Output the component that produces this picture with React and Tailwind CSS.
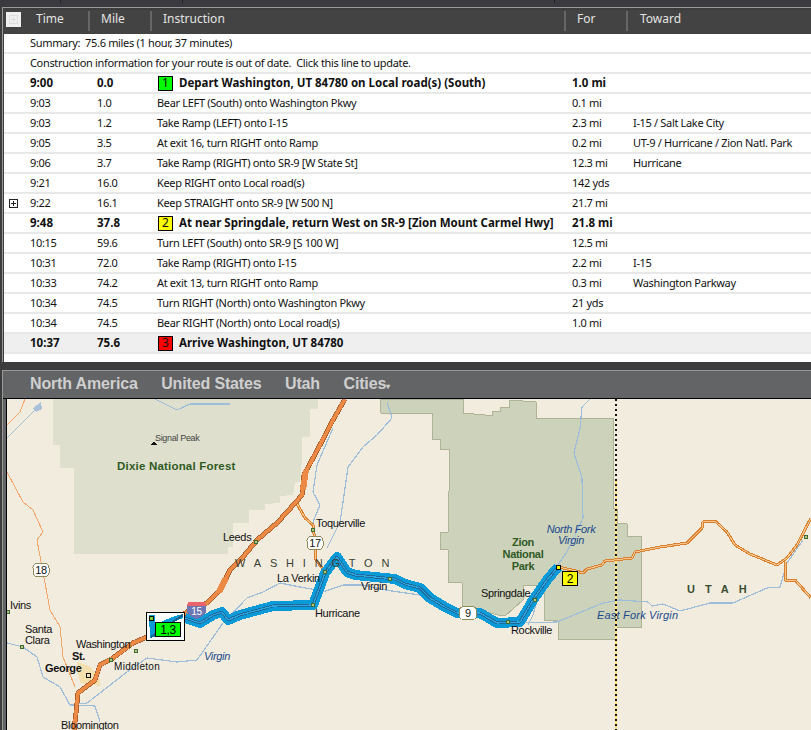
import React from "react";

const rows = [
  { time: "9:00", mile: "0.0", text: "Depart Washington, UT 84780 on Local road(s) (South)", dist: "1.0 mi", bold: true, pin: "1", pinBg: "bg-[#00ff00]" },
  { time: "9:03", mile: "1.0", text: "Bear LEFT (South) onto Washington Pkwy", dist: "0.1 mi" },
  { time: "9:03", mile: "1.2", text: "Take Ramp (LEFT) onto I-15", dist: "2.3 mi", toward: "I-15 / Salt Lake City" },
  { time: "9:05", mile: "3.5", text: "At exit 16, turn RIGHT onto Ramp", dist: "0.2 mi", toward: "UT-9 / Hurricane / Zion Natl. Park" },
  { time: "9:06", mile: "3.7", text: "Take Ramp (RIGHT) onto SR-9 [W State St]", dist: "12.3 mi", toward: "Hurricane" },
  { time: "9:21", mile: "16.0", text: "Keep RIGHT onto Local road(s)", dist: "142 yds" },
  { time: "9:22", mile: "16.1", text: "Keep STRAIGHT onto SR-9 [W 500 N]", dist: "21.7 mi", plus: true },
  { time: "9:48", mile: "37.8", text: "At near Springdale, return West on SR-9 [Zion Mount Carmel Hwy]", dist: "21.8 mi", bold: true, pin: "2", pinBg: "bg-[#ffff00]" },
  { time: "10:15", mile: "59.6", text: "Turn LEFT (South) onto SR-9 [S 100 W]", dist: "12.5 mi" },
  { time: "10:31", mile: "72.0", text: "Take Ramp (RIGHT) onto I-15", dist: "2.2 mi", toward: "I-15" },
  { time: "10:33", mile: "74.2", text: "At exit 13, turn RIGHT onto Ramp", dist: "0.3 mi", toward: "Washington Parkway" },
  { time: "10:34", mile: "74.5", text: "Turn RIGHT (North) onto Washington Pkwy", dist: "21 yds" },
  { time: "10:34", mile: "74.5", text: "Bear RIGHT (North) onto Local road(s)", dist: "1.0 mi" },
  { time: "10:37", mile: "75.6", text: "Arrive Washington, UT 84780", bold: true, pin: "3", pinBg: "bg-[#ff0000]", shaded: true },
];

const PlusBox = ({ light }) => (
  <svg width="9" height="9" viewBox="0 0 9 9" className="block">
    <rect x="0.5" y="0.5" width="8" height="8" fill="none" stroke={light ? "#ddd" : "#222"} />
    <path d="M4.5 2v5M2 4.5h5" stroke={light ? "#ddd" : "#222"} />
  </svg>
);

const Row = ({ r }) => (
  <div className={`flex h-5 shrink-0 items-center border-b-2 border-[#e8e8e8] ${r.shaded ? "bg-[#efefef]" : ""} ${r.bold ? "text-[11.5px] font-bold tracking-normal" : ""}`}>
    <div className="flex w-[26px] shrink-0 pl-[5px]">{r.plus && <PlusBox />}</div>
    <div className="w-[67px] shrink-0">{r.time}</div>
    <div className="w-[60px] shrink-0">{r.mile}</div>
    <div className="flex w-[415px] shrink-0 items-center whitespace-pre">
      {r.pin && (
        <span className={`mr-[6px] ml-[1px] flex h-[15px] w-[15px] items-center justify-center border border-black text-[12px] font-normal ${r.pinBg}`}>
          {r.pin}
        </span>
      )}
      {r.text}
    </div>
    <div className="w-[61px] shrink-0">{r.dist}</div>
    <div className="whitespace-nowrap">{r.toward}</div>
  </div>
);

const Road = ({ d, w = 3, outer = "#d9812f", inner = "#f6c48a", iw = 1 }) => (
  <g fill="none" strokeLinejoin="round">
    <polyline points={d} stroke={outer} strokeWidth={w} />
    <polyline points={d} stroke={inner} strokeWidth={iw} />
  </g>
);

const River = ({ d }) => <polyline points={d} fill="none" stroke="#9dbdd8" strokeWidth="1.2" />;

const Shield = ({ x, y, n, w = 16 }) => (
  <g>
    <rect x={x - w / 2} y={y - 6.5} width={w} height="13" rx="4" fill="#fff" stroke="#8f8a5c" />
    <text x={x} y={y + 4} textAnchor="middle" fontSize="11" fill="#111">{n}</text>
  </g>
);

const Town = ({ x, y }) => <circle cx={x} cy={y} r="1.8" fill="#b9c77e" stroke="#3f6b37" />;

const Label = ({ x, y, children, size = 11, fill = "#111", weight, style, spacing, anchor }) => (
  <text x={x} y={y} fontSize={size} fill={fill} fontWeight={weight} fontStyle={style} letterSpacing={spacing} textAnchor={anchor}>
    {children}
  </text>
);

const route =
  "185,618 200,623 213,615 222,612 228,620 240,615 273,606 313,605 325,573 337,557 347,572 355,575 395,579 405,584 420,588 430,598 445,607 457,613 480,613 497,623 520,622 533,600 547,580 558,567";
const freeway =
  "345,399 333,420 320,445 304,475 302,495 296,502 278,522 257,540 243,557 230,570 220,590 207,603 187,612 147,637 133,643 113,658 100,665 95,680 78,693 76,713 74,730";

const RouteMap = () => (
  <svg width="804" height="331" viewBox="7 399 804 331" shapeRendering="crispEdges" className="block font-['Liberation_Sans',sans-serif]">
    <rect x="7" y="399" width="804" height="331" fill="#f2ecdf" />

    <polygon
      points="53,399 318,399 318,409 310,409 310,437 302,437 302,460 300,482 295,482 293,495 280,496 280,503 265,504 265,510 249,510 249,523 233,523 233,547 228,547 228,554 74,554 74,468 60,468 60,445 53,445"
      fill="#dee0cd"
    />
    <polygon
      points="380,399 463,399 463,413 485,415 492,415 492,411 500,411 500,407 509,407 509,400 523,401 536,402 536,418 613,418 613,508 617,509 617,523 627,524 627,536 641,536 641,627 616,627 615,640 558,639 558,621 544,620 544,585 523,585 523,600 505,616 498,615 462,606 462,583 448,582 448,550 440,549 440,532 448,532 449,491 449,449 440,449 440,439 432,439 432,413 392,413 381,413"
      fill="#cdd2bb"
      stroke="#aeb396"
    />
    <polygon points="77,662 90,666 100,680 100,686 80,683 78,672" fill="#f3e0ae" />

    <River d="155,399 177,410 190,404 230,404" />
    <River d="7,438 35,410" />
    <polygon points="33,408 41,402 42,409 36,412" fill="#a9c0d8" />
    <River d="387,402 392,418 377,435 363,447 348,467 343,502 340,522 327,548" />
    <River d="333,428 317,465 313,492 320,505 313,522 316,540" />
    <River d="7,643 23,647 37,657 43,677 60,687 70,705 87,703 127,672 147,658 177,662 197,660 223,623 247,598 263,592 280,583 300,587 317,590 323,592 343,585 363,585 385,590 420,595 455,612 480,618 520,623 557,622 603,603 620,600 648,602 652,606 663,604 680,611 710,603 733,603 767,588 780,587 787,563 803,540" />
    <River d="590,399 582,407 580,428 574,453 582,478 583,518 567,552 540,590 533,615 528,625" />
    <River d="70,705 95,706 100,722" />

    <polyline points="616,480 616,730" stroke="#ffe27a" strokeWidth="1.5" />
    <polyline points="616,399 616,730" stroke="#111" strokeWidth="1.5" strokeDasharray="2 3" />

    <polyline points="25,399 20,412 7,425" fill="none" stroke="#f3a56c" strokeWidth="1" />
    <polyline points="7,472 23,502 33,510 43,532 37,540 50,610 60,627 63,657 75,687" fill="none" stroke="#f3a56c" strokeWidth="1" />
    <Road d="296,502 305,518 313,525 315,543 316,560 325,572" />
    <Road d="558,567 572,570 583,573 587,569 602,565 605,561 632,558 635,552 660,547 687,543 702,528 703,522 715,521 727,532 735,545 750,554 777,565 787,558 797,545 811,518" />
    <Road d="785,562 785,580 795,580 811,598" />

    <polyline points={freeway} fill="none" stroke="#a9602c" strokeWidth="5" strokeLinejoin="round" />
    <polyline points={freeway} fill="none" stroke="#ec8a45" strokeWidth="3.5" strokeLinejoin="round" />
    <polyline points="306,470 303,490" fill="none" stroke="#ec8a45" strokeWidth="6" />
    <polyline points="226,578 219,592" fill="none" stroke="#ec8a45" strokeWidth="6" />

    <polyline points={route} fill="none" stroke="#0a9ad8" strokeWidth="10" strokeLinejoin="round" />
    <polyline points={route} fill="none" stroke="#1f6a9c" strokeWidth="3" strokeLinejoin="round" />
    <polyline points={route} fill="none" stroke="#2fa3dc" strokeWidth="1.2" strokeLinejoin="round" />

    <Town x={256} y={542} />
    <Town x={313} y={530} />
    <Town x={325} y={572} />
    <Town x={313} y={605} />
    <Town x={390} y={579} />
    <Town x={508} y={622} />
    <Town x={535} y={600} />
    <Town x={22} y={647} />
    <Town x={8} y={612} />
    <Town x={111} y={660} />
    <Town x={136} y={651} />
    <Town x={806} y={537} />
    <rect x="86.5" y="673.5" width="4" height="4" fill="none" stroke="#111" />

    <Label x={155} y={441} size={9} fill="#444">Signal Peak</Label>
    <polygon points="151,444.5 154,442 157,444.5" fill="#111" />
    <Label x={117} y={470} size={11.5} spacing="0.2" weight="bold" fill="#2f5a24">Dixie National Forest</Label>
    <Label x={223} y={541}>Leeds</Label>
    <Label x={316} y={527}>Toquerville</Label>
    <Label x={235} y={567} fill="#3a3f33" spacing="8.8">WASHINGTON</Label>
    <Label x={277} y={582}>La Verkin</Label>
    <Label x={361} y={590}>Virgin</Label>
    <Label x={315} y={617}>Hurricane</Label>
    <Label x={481} y={597}>Springdale</Label>
    <Label x={511} y={634}>Rockville</Label>
    <Label x={523} y={546} anchor="middle" weight="bold" fill="#2f5a24">Zion</Label>
    <Label x={523} y={558} anchor="middle" weight="bold" fill="#2f5a24">National</Label>
    <Label x={523} y={570} anchor="middle" weight="bold" fill="#2f5a24">Park</Label>
    <Label x={571} y={533} anchor="middle" style="italic" fill="#1c4a8c">North Fork</Label>
    <Label x={571} y={544} anchor="middle" style="italic" fill="#1c4a8c">Virgin</Label>
    <Label x={597} y={619} style="italic" fill="#1c4a8c" spacing="0.2">East Fork Virgin</Label>
    <Label x={204} y={660} style="italic" fill="#1c4a8c">Virgin</Label>
    <Label x={687} y={593} weight="bold" fill="#3a4d33" spacing="10">UTAH</Label>
    <Label x={10} y={609}>Ivins</Label>
    <Label x={25} y={633}>Santa</Label>
    <Label x={25} y={644}>Clara</Label>
    <Label x={76} y={648}>Washington</Label>
    <Label x={114} y={670} size={10} spacing="0.3">Middleton</Label>
    <Label x={72} y={660} weight="bold">St.</Label>
    <Label x={45} y={672} weight="bold">George</Label>
    <Label x={61} y={729}>Bloomington</Label>

    <Shield x={41} y={570} n="18" />
    <Shield x={315} y={543} n="17" />
    <Shield x={468} y={613} n="9" w={17} />
    <path d="M188 602h17l1 5v5q-1 4-9.5 7q-8.5-3-9.5-7v-5z" fill="#6c76b4" />
    <path d="M188 602h17l1 4h-19z" fill="#e9646a" />
    <text x="196.5" y="615" textAnchor="middle" fontSize="10" fill="#fff">15</text>

    <rect x="146.5" y="612.5" width="38" height="28" fill="#fff" stroke="#000" />
    <polygon points="149,615 155,615 156,636 150,638" fill="#0a9ad8" />
    <polygon points="161,622 172,617 183,614 183,618 172,622" fill="#0a9ad8" />
    <polyline points="183,615 151,637" stroke="#1d5f8c" strokeWidth="2" />
    <rect x="149.5" y="616.5" width="4" height="4" fill="#7cd432" stroke="#000" />
    <rect x="155.5" y="622.5" width="25" height="14" fill="#00ff00" stroke="#000" />
    <text x="168" y="634" textAnchor="middle" fontSize="12" fill="#000">1,3</text>

    <rect x="556.5" y="565.5" width="4" height="4" fill="#ffff00" stroke="#000" />
    <rect x="562.5" y="571.5" width="15" height="14" fill="#ffff00" stroke="#000" />
    <text x="570" y="583" textAnchor="middle" fontSize="12" fill="#000">2</text>
  </svg>
);

const App = () => {
  return (
    <div className="flex h-[730px] w-[811px] flex-col overflow-hidden bg-[#3d3d3d] font-['Noto_Sans',sans-serif] text-[11px] tracking-[-0.33px] text-[#111]">
      <div className="flex h-[7px] shrink-0 bg-[#3a3a40]">
        <div className="h-[3px] w-[61px] border-r border-[#222]"></div>
        <div className="h-[3px] w-[122px] border-r border-[#222]"></div>
        <div className="h-[3px] w-[372px] border-r border-[#222]"></div>
      </div>
      <div className="ml-[2px] flex h-[355px] shrink-0 flex-col border-t border-l border-[#999]">
        <div className="flex h-[26px] shrink-0 items-center border-t-2 border-[#3d3d3d] bg-[#434343] pb-[2px] text-[12px] tracking-normal text-[#e4e4e4]">
          <div className="flex w-[28px] shrink-0 pl-[3px]">
            <span className="mb-[3px] flex h-[15px] w-[15px] items-center justify-center bg-[#f0f0f0]">
              <PlusBox light />
            </span>
          </div>
          <div className="flex h-5 w-[59px] shrink-0 items-center border-r-2 border-[#666] pb-[4px] pl-[5px]">Time</div>
          <div className="flex h-5 w-[62px] shrink-0 items-center border-r-2 border-[#666] pb-[4px] pl-[11px]">Mile</div>
          <div className="flex h-5 w-[414px] shrink-0 items-center border-r-2 border-[#666] pb-[4px] pl-[11px]">Instruction</div>
          <div className="flex h-5 w-[62px] shrink-0 items-center border-r-2 border-[#666] pb-[4px] pl-[11px]">For</div>
          <div className="flex h-5 items-center pb-[4px] pl-[12px]">Toward</div>
        </div>
        <div className="flex flex-1 flex-col border-l border-[#3d3d3d] bg-white">
          <div className="flex h-5 shrink-0 items-center whitespace-pre border-b-2 border-[#e8e8e8] pl-[26px]">{"Summary:  75.6 miles (1 hour, 37 minutes)"}</div>
          <div className="flex h-5 shrink-0 items-center whitespace-pre border-b-2 border-[#e8e8e8] pl-[26px]">{"Construction information for your route is out of date.  Click this line to update."}</div>
          {rows.map((r, i) => (
            <Row key={i} r={r} />
          ))}
        </div>
      </div>
      <div className="ml-[2px] mt-[8px] flex min-h-0 flex-1 flex-col border-t border-l border-[#999]">
        <div className="flex h-[27px] shrink-0 items-center gap-[23.5px] bg-[#636466] pb-[2px] pl-[27px] font-['Liberation_Sans',sans-serif] text-[16px] font-bold tracking-[-0.15px] text-[#cfcfcf]">
          <span>North America</span>
          <span>United States</span>
          <span>Utah</span>
          <span>Cities<span className="text-[8px]">▾</span></span>
        </div>
        <div className="flex min-h-0 flex-1 border-t border-black bg-[#636466] pl-[3px]">
          <div className="border-l border-black">
            <RouteMap />
          </div>
        </div>
      </div>
    </div>
  );
};

export default App;
